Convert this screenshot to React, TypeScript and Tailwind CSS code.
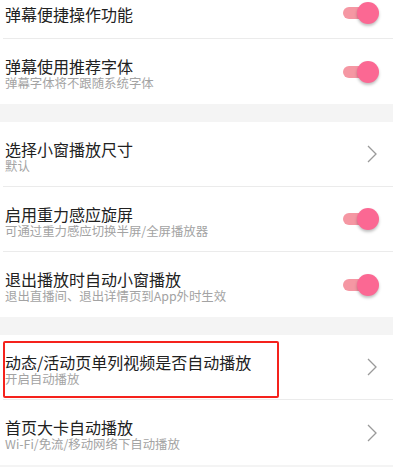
const font = { fontFamily: '"Noto Sans CJK SC", "Noto Sans", sans-serif' }

type Row = { title: string; sub?: string; kind: "toggle" | "arrow" }

function Toggle() {
  return (
    <div className="relative h-[22px] w-[36px]">
      <div className="absolute left-0 top-[5px] h-[12px] w-[30px] rounded-full bg-[#f597a3]" />
      <div className="absolute right-0 top-0 h-[22px] w-[22px] rounded-full bg-[#fb6893] shadow-[0_2px_3px_rgba(0,0,0,0.25)]" />
    </div>
  )
}

function Chevron() {
  return (
    <svg width="10" height="18" viewBox="0 0 10 18" fill="none">
      <path d="M1 1 L9 9 L1 17" stroke="#9a9a9a" strokeWidth="1.3" />
    </svg>
  )
}

function SettingRow({ row, last, tall = true }: { row: Row; last?: boolean; tall?: boolean }) {
  return (
    <div className="bg-white">
      <div
        className={
          "ml-[3px] flex items-center justify-between pl-[2px] pr-[14px] " +
          (tall ? "h-[65px] " : "h-[52px] ") +
          (last ? "" : "border-b border-[#ebebeb]")
        }
      >
        <div className={"flex flex-col " + (row.sub ? "mt-[5px]" : "mt-[3px]")}>
          <div className="text-[16px] leading-[18px] text-[#212121]">{row.title}</div>
          {row.sub && (
            <div className="text-[12.4px] leading-[16px] text-[#a3a3a3]">{row.sub}</div>
          )}
        </div>
        {row.kind === "toggle" ? <Toggle /> : <div className="pr-[2px]"><Chevron /></div>}
      </div>
    </div>
  )
}

export default function App() {
  return (
    <div className="h-[467px] w-[393px] overflow-hidden bg-[#f4f4f4]" style={font}>
      <div className="-mt-[13px]">
        <SettingRow tall={false} row={{ title: "弹幕便捷操作功能", kind: "toggle" }} />
        <SettingRow last row={{ title: "弹幕使用推荐字体", sub: "弹幕字体将不跟随系统字体", kind: "toggle" }} />
        <div className="h-[18px]" />
        <SettingRow row={{ title: "选择小窗播放尺寸", sub: "默认", kind: "arrow" }} />
        <SettingRow row={{ title: "启用重力感应旋屏", sub: "可通过重力感应切换半屏/全屏播放器", kind: "toggle" }} />
        <SettingRow last row={{ title: "退出播放时自动小窗播放", sub: "退出直播间、退出详情页到App外时生效", kind: "toggle" }} />
        <div className="h-[18px]" />
        <div className="relative">
          <SettingRow row={{ title: "动态/活动页单列视频是否自动播放", sub: "开启自动播放", kind: "arrow" }} />
          <div className="absolute left-[3px] top-[6px] h-[57px] w-[276px] rounded-[2px] border-[2.5px] border-[#f5221c]" />
        </div>
        <SettingRow last row={{ title: "首页大卡自动播放", sub: "Wi-Fi/免流/移动网络下自动播放", kind: "arrow" }} />
      </div>
    </div>
  )
}
